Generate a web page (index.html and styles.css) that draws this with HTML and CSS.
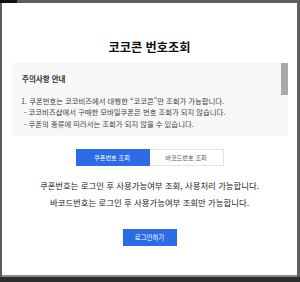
FILE: index.html
```html
<!DOCTYPE html>
<html lang="ko">
<head>
    <meta charset="UTF-8">
    <meta name="viewport" content="width=device-width, initial-scale=1.0">
    <title>코코콘 번호조회</title>
    <link rel="stylesheet" href="styles.css">
</head>
<body>
    <div class="modal">
        <h2 class="modal-title">코코콘 번호조회</h2>

        <!-- 주의사항 -->
        <div class="notice">
            <h3 class="notice-title">주의사항 안내</h3>
            <ul class="notice-list">
                <li>1. 쿠폰번호는 코코비즈에서 대행한 “코코콘”만 조회가 가능합니다.</li>
                <li class="sub">- 코코비즈샵에서 구매한 모바일쿠폰은 번호 조회가 되지 않습니다.</li>
                <li class="sub">- 쿠폰의 종류에 따라서는 조회가 되지 않을 수 있습니다.</li>
            </ul>
            <span class="scroll-thumb"></span>
        </div>

        <div class="tabs">
            <button class="tab active">쿠폰번호 조회</button>
            <button class="tab">바코드번호 조회</button>
        </div>

        <div class="info">
            <p>쿠폰번호는 로그인 후 사용가능여부 조회, 사용처리 가능합니다.</p>
            <p>바코드번호는 로그인 후 사용가능여부 조회만 가능합니다.</p>
        </div>

        <div class="actions">
            <button class="btn-login">로그인하기</button>
        </div>
    </div>
</body>
</html>
```

FILE: styles.css
```css
body {
    margin: 0;
    height: 282px;
    overflow: hidden;
    background: linear-gradient(#5e5e5e 277px, #2e2e2e 277px);
    font-family: "Noto Sans CJK KR", "Noto Sans", sans-serif;
    color: #222;
}

body::before {
    content: "";
    position: absolute;
    top: 0;
    left: 0;
    width: 17px;
    height: 3px;
    background: #111;
}

.modal {
    margin: 3px 3px 0 2px;
    height: 274px;
    padding-top: 36px;
    box-sizing: border-box;
    background: #fff;
    border-bottom: 2px solid #8a8a8a;
}

.modal-title {
    margin: 0;
    font-size: 12.2px;
    line-height: 16px;
    font-weight: 700;
    text-align: center;
    color: #111;
}

.notice {
    position: relative;
    margin: 8px 9px 0 10px;
    height: 73px;
    padding: 11px 0 0 10px;
    box-sizing: border-box;
    background: #f7f7f7;
}

.notice-title {
    margin: 0;
    font-size: 7.5px;
    line-height: 10px;
    font-weight: 700;
    color: #333;
}

.notice-list {
    margin: 10.5px 0 0 -1px;
    padding: 0;
    list-style: none;
    font-size: 7.35px;
    line-height: 11.5px;
    color: #444;
}

.notice-list .sub {
    padding-left: 3px;
}

.scroll-thumb {
    position: absolute;
    top: 0;
    right: 0;
    width: 7px;
    height: 32px;
    background: #a9a9a9;
}

.tabs {
    display: flex;
    justify-content: center;
    margin-top: 13px;
}

.tab {
    width: 74px;
    height: 17px;
    padding: 0;
    font-family: inherit;
    font-size: 6.2px;
    color: #555;
    background: #fff;
    border: 1px solid #e3e3e3;
    border-left: none;
}

.tab.active {
    color: #fff;
    background: #2b6be6;
    border-color: #2b6be6;
}

.info {
    margin-top: 10.5px;
    text-align: center;
    font-size: 8.4px;
    line-height: 17px;
    color: #222;
}

.info p {
    margin: 0;
}

.actions {
    display: flex;
    justify-content: center;
    margin-top: 18.5px;
}

.btn-login {
    width: 54px;
    height: 17px;
    padding: 0;
    font-family: inherit;
    font-size: 6.4px;
    color: #fff;
    background: #2b6be6;
    border: none;
}
```
